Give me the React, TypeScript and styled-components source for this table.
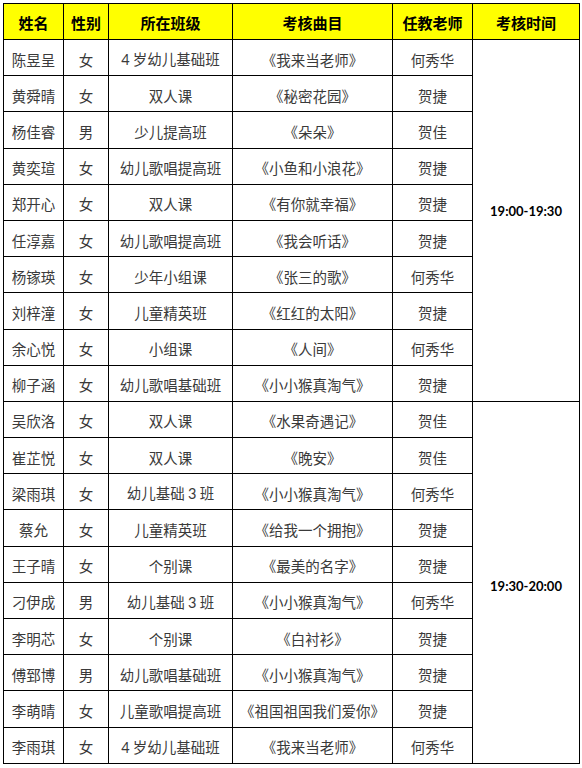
import { createGlobalStyle, styled } from "styled-components";
import { ReactElement } from "react";

const GlobalStyle = createGlobalStyle`
  body {
    margin: 0;
    background: #ffffff;
  }
`;

const Page = styled.div`
  padding: 3px 4px 3px 3px;
`;

const Table = styled.table`
  width: 576px;
  border-collapse: collapse;
  table-layout: fixed;
  font-family: "Noto Sans CJK SC", "Noto Sans", sans-serif;
`;

const HeadCell = styled.th`
  height: 33px;
  padding: 2px 0 0;
  background: #ffff00;
  border: 1px solid #000;
  color: #000;
  font-size: 15px;
  font-weight: 700;
  text-align: center;
  vertical-align: middle;
`;

const Cell = styled.td`
  height: 31.2px;
  padding: 4px 0 0;
  border: 1px solid #000;
  color: #3a3a3a;
  font-size: 14.5px;
  line-height: 20px;
  text-align: center;
  vertical-align: middle;
  white-space: nowrap;
`;

// merged time slot cell; $lift moves the label up (+) or down (-) from centre
const TimeCell = styled.td<{ $lift: number }>`
  padding: ${(p) =>
    p.$lift > 0 ? `0 0 ${p.$lift * 2}px` : `${-p.$lift * 2}px 0 0`};
  border: 1px solid #000;
  color: #000;
  font-family: Lato, "Noto Sans", sans-serif;
  font-size: 13px;
  font-weight: 700;
  text-align: center;
  vertical-align: middle;
`;

const Num = styled.span`
  font-family: Lato, "Noto Sans", sans-serif;
`;

const cols = [60, 45, 124, 160, 80, 107];
const heads = ["姓名", "性别", "所在班级", "考核曲目", "任教老师", "考核时间"];

type Row = [string, string, string, string, string];

const rows: Row[] = [
  ["陈昱呈", "女", "4 岁幼儿基础班", "《我来当老师》", "何秀华"],
  ["黄舜晴", "女", "双人课", "《秘密花园》", "贺捷"],
  ["杨佳睿", "男", "少儿提高班", "《朵朵》", "贺佳"],
  ["黄奕瑄", "女", "幼儿歌唱提高班", "《小鱼和小浪花》", "贺捷"],
  ["郑开心", "女", "双人课", "《有你就幸福》", "贺捷"],
  ["任淳嘉", "女", "幼儿歌唱提高班", "《我会听话》", "贺捷"],
  ["杨镓瑛", "女", "少年小组课", "《张三的歌》", "何秀华"],
  ["刘梓潼", "女", "儿童精英班", "《红红的太阳》", "贺捷"],
  ["余心悦", "女", "小组课", "《人间》", "何秀华"],
  ["柳子涵", "女", "幼儿歌唱基础班", "《小小猴真淘气》", "贺捷"],
  ["吴欣洛", "女", "双人课", "《水果奇遇记》", "贺佳"],
  ["崔芷悦", "女", "双人课", "《晚安》", "贺佳"],
  ["梁雨琪", "女", "幼儿基础 3 班", "《小小猴真淘气》", "何秀华"],
  ["蔡允", "女", "儿童精英班", "《给我一个拥抱》", "贺捷"],
  ["王子晴", "女", "个别课", "《最美的名字》", "贺捷"],
  ["刁伊成", "男", "幼儿基础 3 班", "《小小猴真淘气》", "何秀华"],
  ["李明芯", "女", "个别课", "《白衬衫》", "贺捷"],
  ["傅郅博", "男", "幼儿歌唱基础班", "《小小猴真淘气》", "贺捷"],
  ["李萌晴", "女", "儿童歌唱提高班", "《祖国祖国我们爱你》", "贺捷"],
  ["李雨琪", "女", "4 岁幼儿基础班", "《我来当老师》", "何秀华"],
];

const slots: Record<number, { label: string; lift: number }> = {
  0: { label: "19:00-19:30", lift: 9 },
  10: { label: "19:30-20:00", lift: -4 },
};

function withDigits(text: string): ReactElement[] {
  return text.split(/(\d+)/).map((part, i) =>
    /^\d+$/.test(part) ? <Num key={i}>{part}</Num> : <span key={i}>{part}</span>
  );
}

export default function App(): ReactElement {
  return (
    <>
      <GlobalStyle />
      <Page>
        <Table>
          <colgroup>
            {cols.map((w, i) => (
              <col key={i} style={{ width: `${w}px` }} />
            ))}
          </colgroup>
          <thead>
            <tr>
              {heads.map((h) => (
                <HeadCell key={h}>{h}</HeadCell>
              ))}
            </tr>
          </thead>
          <tbody>
            {rows.map((r, i) => (
              <tr key={i}>
                <Cell>{r[0]}</Cell>
                <Cell>{r[1]}</Cell>
                <Cell>{withDigits(r[2])}</Cell>
                <Cell>{r[3]}</Cell>
                <Cell>{r[4]}</Cell>
                {slots[i] && (
                  <TimeCell $lift={slots[i].lift} rowSpan={10}>
                    {slots[i].label}
                  </TimeCell>
                )}
              </tr>
            ))}
          </tbody>
        </Table>
      </Page>
    </>
  );
}
